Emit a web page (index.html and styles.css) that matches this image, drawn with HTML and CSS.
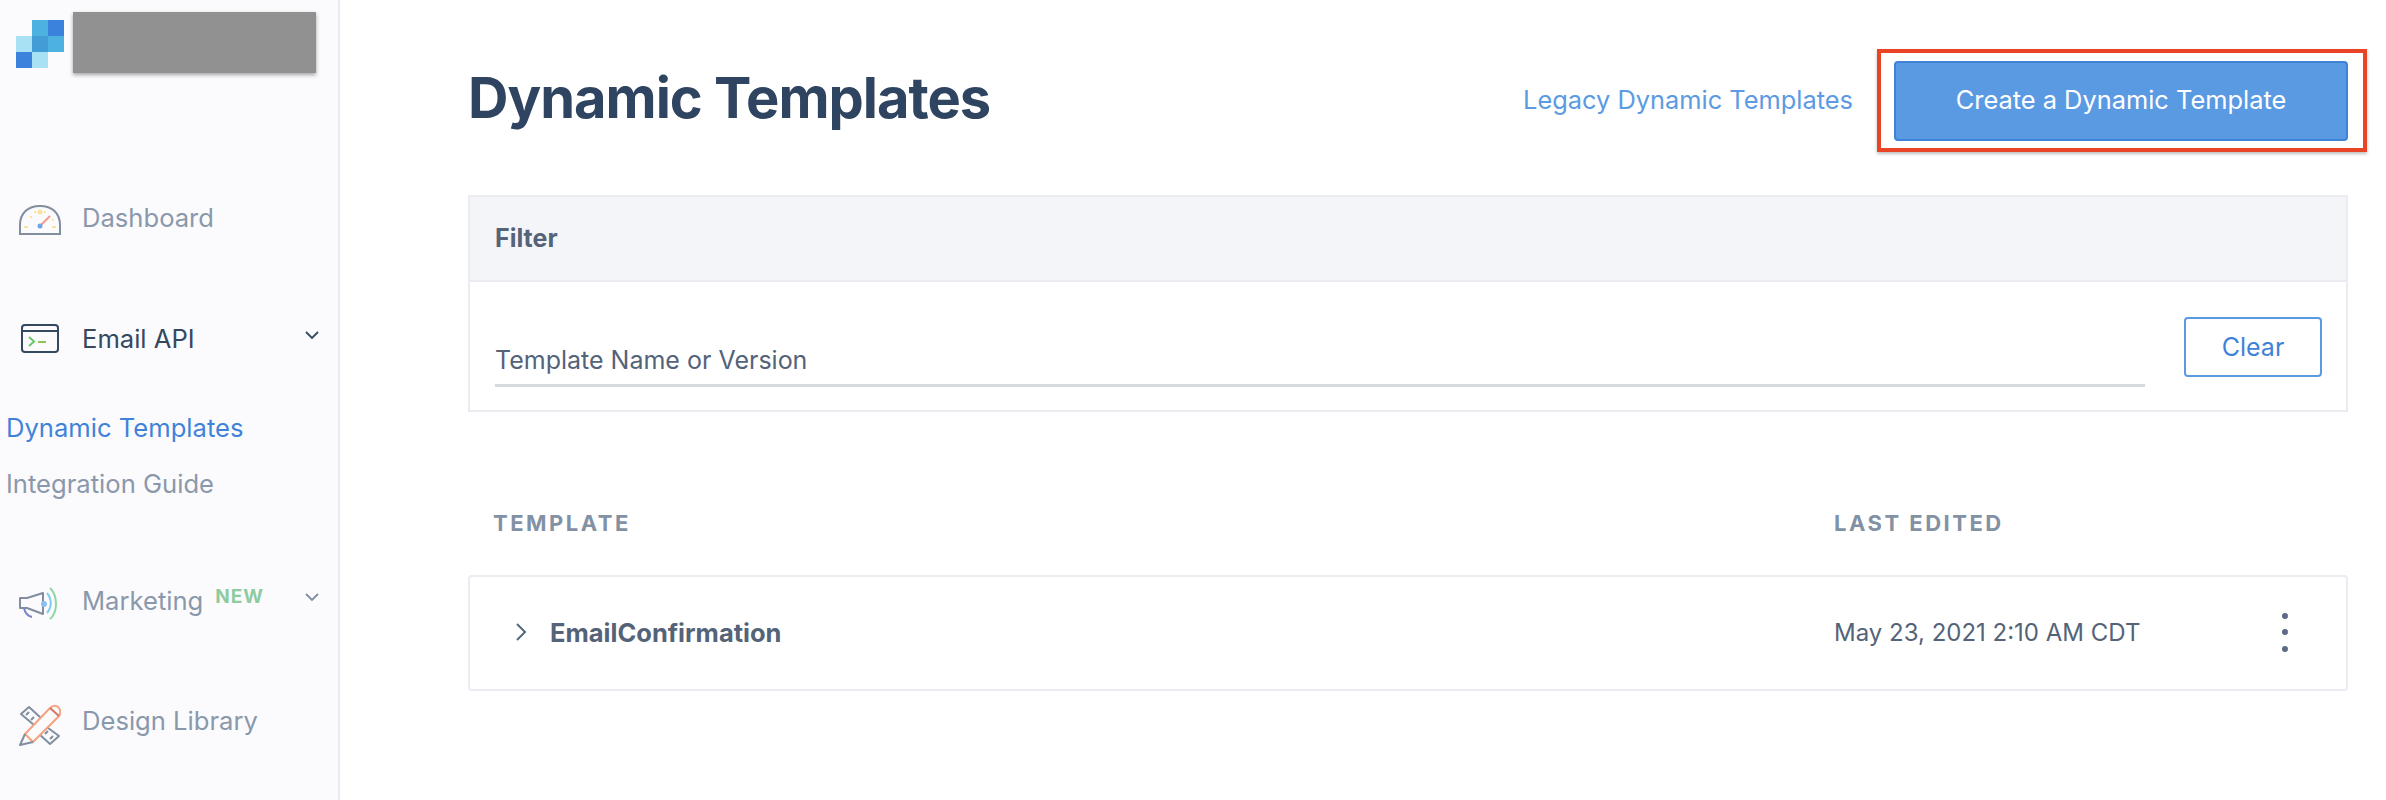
FILE: index.html
```html
<!DOCTYPE html>
<html>
  <head>
    <title>Dynamic Templates</title>
    <link rel="stylesheet" href="styles.css">
  </head>
  <body>
    <aside class="sidebar">
      <div class="brand">
        <svg class="logo" width="48" height="48" viewBox="0 0 48 48">
          <rect x="16" y="0" width="16" height="16" fill="#4db2e0"/>
          <rect x="32" y="0" width="16" height="16" fill="#3b82dc"/>
          <rect x="0" y="16" width="16" height="16" fill="#a8e1f3"/>
          <rect x="16" y="16" width="16" height="16" fill="#429cd6"/>
          <rect x="32" y="16" width="16" height="16" fill="#4db2e0"/>
          <rect x="0" y="32" width="16" height="16" fill="#3b82dc"/>
          <rect x="16" y="32" width="16" height="16" fill="#a8e1f3"/>
        </svg>
        <div class="brand-mask"></div>
      </div>

      <nav>
        <a class="nav-item nav-dashboard">
          <svg class="nav-icon" width="44" height="40" viewBox="0 0 44 40" fill="none">
            <path d="M3 37V28C3 16 11 9 23 9S43 16 43 28V37Z" stroke="#818e9f" stroke-width="2"/>
            <path d="M23 29L33 19" stroke="#f59a82" stroke-width="2"/>
            <circle cx="23" cy="29" r="2.500" fill="#6ea5ea"/>
            <circle cx="23" cy="15" r="2.500" fill="#fbe39a"/>
            <path d="M7 30H11M35 30H39M13 20H15M35 23H37M17 15H19M27 15H29" stroke="#fbe39a" stroke-width="2"/>
          </svg>
          <span>Dashboard</span>
        </a>

        <a class="nav-item nav-email">
          <svg class="nav-icon" width="44" height="40" viewBox="0 0 44 40" fill="none">
            <rect x="5" y="7" width="36" height="27" rx="3" stroke="#34495f" stroke-width="2"/>
            <path d="M5 13H41" stroke="#34495f" stroke-width="2"/>
            <path d="M12 19L17 23.500L12 28" stroke="#6cc76b" stroke-width="2"/>
            <path d="M21 24H29" stroke="#8fc45a" stroke-width="2"/>
          </svg>
          <span>Email API</span>
          <svg class="chevron" width="14" height="10" viewBox="0 0 14 10" fill="none">
            <path d="M1 2L7 8L13 2" stroke="#34495f" stroke-width="1.800"/>
          </svg>
        </a>
        <a class="sub-item sub-active">Dynamic Templates</a>
        <a class="sub-item">Integration Guide</a>

        <a class="nav-item nav-marketing">
          <svg class="nav-icon" width="44" height="40" viewBox="0 0 44 40" fill="none">
            <path d="M3 18H10L26 13V34L10 28H3Z" stroke="#818e9f" stroke-width="2" stroke-linejoin="round"/>
            <path d="M7 28C8 33 11 36 15 37" stroke="#7a84c9" stroke-width="2"/>
            <circle cx="27" cy="24" r="3" fill="#8cc0f0"/>
            <path d="M30 13C35 19 35 27 30 33" stroke="#7fcde8" stroke-width="2"/>
            <path d="M33 8C41 16 41 32 33 39" stroke="#92d6a4" stroke-width="2"/>
          </svg>
          <span>Marketing</span>
          <sup class="badge-new">NEW</sup>
          <svg class="chevron" width="14" height="10" viewBox="0 0 14 10" fill="none">
            <path d="M1 2L7 8L13 2" stroke="#818e9f" stroke-width="1.800"/>
          </svg>
        </a>

        <a class="nav-item nav-design">
          <svg class="nav-icon nav-icon-tall" width="44" height="46" viewBox="0 0 44 46" fill="none">
            <path d="M17 25L4 14L12 7L24 18" stroke="#818e9f" stroke-width="2" stroke-linejoin="round"/>
            <path d="M27 25L42 36L33 44L21 33" stroke="#818e9f" stroke-width="2" stroke-linejoin="round"/>
            <path d="M12 12L9 15M17 17L14 20M31 31L28 34M36 36L33 39" stroke="#818e9f" stroke-width="2"/>
            <path d="M8 34L33 8C36 5 40 5 42 8C44 11 44 13 42 16L16 42Z" fill="#fbfbfd" stroke="#f4a27f" stroke-width="2"/>
            <path d="M33 8L42 16" stroke="#d2765f" stroke-width="2"/>
            <path d="M8 34L3 45L16 42" stroke="#818e9f" stroke-width="2" stroke-linejoin="round"/>
          </svg>
          <span>Design Library</span>
        </a>
      </nav>
    </aside>

    <main class="content">
      <header class="page-header">
        <h1>Dynamic Templates</h1>
        <a class="legacy-link">Legacy Dynamic Templates</a>
        <div class="callout">
          <button class="btn-primary">Create a Dynamic Template</button>
        </div>
      </header>

      <section class="filter-panel">
        <div class="filter-title">Filter</div>
        <div class="filter-body">
          <div class="filter-field">Template Name or Version</div>
          <button class="btn-outline">Clear</button>
        </div>
      </section>

      <div class="table-head">
        <span class="col-name">TEMPLATE</span>
        <span class="col-date">LAST EDITED</span>
      </div>

      <div class="table-row">
        <svg class="row-toggle" width="12" height="18" viewBox="0 0 12 18" fill="none">
          <path d="M2 1L10 9L2 17" stroke="#56677d" stroke-width="2"/>
        </svg>
        <span class="row-name">EmailConfirmation</span>
        <span class="row-date">May 23, 2021 2:10 AM CDT</span>
        <div class="row-menu">
          <i></i><i></i><i></i>
        </div>
      </div>
    </main>
  </body>
</html>
```

FILE: styles.css
```css
body {
  font-family: Inter, "Liberation Sans", sans-serif;
  background-color: #fff;
  color: #546378;
  margin: 0;
  display: flex;
  height: 800px;
  overflow: hidden;
}
.sidebar {
  width: 338px;
  flex: none;
  background-color: #fbfbfd;
  border-right: 2px solid #ebecf2;
}
.brand {
  display: flex;
  align-items: flex-start;
  padding: 12px 0 0 16px;
  gap: 9px;
}
.logo {
  margin-top: 8px;
}
.brand-mask {
  width: 243px;
  height: 61px;
  background-color: #919191;
  box-shadow: 0 2px 4px rgba(0, 0, 0, 0.35);
}
.nav-item {
  display: flex;
  align-items: center;
  height: 40px;
  padding-left: 17px;
  font-size: 25.600px;
  color: #8a98ab;
}
.nav-icon {
  flex: none;
  margin-right: 21px;
}
.nav-icon-tall {
  margin-top: 3px;
  margin-bottom: -3px;
}
.chevron {
  margin-left: auto;
  margin-right: 19px;
  margin-bottom: 6px;
}
.nav-dashboard {
  margin-top: 124px;
}
.nav-email {
  margin-top: 81px;
  color: #34495f;
}
.sub-item {
  display: block;
  padding-left: 6px;
  font-size: 25.600px;
  line-height: 40px;
  height: 40px;
  color: #8a98ab;
  margin-top: 16px;
}
.nav-email + .sub-item {
  margin-top: 50px;
}
.sub-active {
  color: #3f83d9;
}
.nav-marketing {
  margin-top: 76px;
}
.badge-new {
  color: #8fcba0;
  font-size: 19px;
  font-weight: 700;
  letter-spacing: 1px;
  margin: -8px 0 0 12px;
}
.nav-design {
  margin-top: 80px;
}
.content {
  flex: 1;
  min-width: 0;
  padding: 0 38px 0 128px;
}
.page-header {
  display: flex;
  align-items: center;
  height: 195px;
}
.page-header h1 {
  margin: 0 auto 0 0;
  font-size: 56px;
  font-weight: 700;
  letter-spacing: -1px;
  color: #2e4460;
}
.legacy-link {
  color: #5c9ae2;
  font-size: 25.400px;
  margin: 3px 24px 0 0;
}
.callout {
  padding: 8px 15px 7px 13px;
  margin: 5px -19px 0 0;
  border: 4px solid #ea4426;
  box-shadow: 0 2px 3px rgba(0, 0, 0, 0.25);
}
.btn-primary {
  display: block;
  width: 454px;
  height: 80px;
  padding-bottom: 4px;
  background-color: #5a9ae2;
  color: white;
  border: 2px solid #3f83d9;
  border-radius: 4px;
  font-family: inherit;
  font-size: 25.400px;
}
.filter-panel {
  border: 2px solid #ebecf2;
  height: 217px;
  box-sizing: border-box;
}
.filter-title {
  height: 85px;
  box-sizing: border-box;
  background-color: #f4f5f8;
  border-bottom: 2px solid #ebecf2;
  padding-left: 25px;
  font-size: 25px;
  font-weight: 700;
  line-height: 83px;
}
.filter-body {
  display: flex;
  align-items: flex-start;
  justify-content: space-between;
  padding: 0 24px 0 25px;
}
.filter-field {
  width: 1650px;
  height: 55px;
  margin-top: 50px;
  box-sizing: border-box;
  border-bottom: 3px solid #d6d9df;
  font-size: 25px;
  line-height: 56px;
}
.btn-outline {
  width: 138px;
  height: 60px;
  margin-top: 35px;
  background-color: white;
  color: #3f83d9;
  border: 2px solid #5a9ae2;
  border-radius: 4px;
  font-family: inherit;
  font-size: 25px;
}
.table-head {
  display: flex;
  margin-top: 95px;
  padding-left: 25px;
  height: 32px;
  line-height: 32px;
  font-size: 22px;
  font-weight: 700;
  letter-spacing: 2.500px;
  color: #8291a3;
}
.col-name {
  width: 1341px;
}
.table-row {
  display: flex;
  align-items: center;
  margin-top: 36px;
  height: 116px;
  box-sizing: border-box;
  border: 2px solid #ebecf2;
  border-radius: 4px;
  padding-left: 45px;
  padding-bottom: 2px;
  font-size: 24px;
}
.row-toggle {
  margin-right: 23px;
}
.row-name {
  width: 1284px;
  font-weight: 700;
  font-size: 25.500px;
}
.row-date {
  width: 448px;
}
.row-menu {
  display: flex;
  flex-direction: column;
  gap: 10.500px;
}
.row-menu i {
  display: block;
  width: 6px;
  height: 6px;
  border-radius: 50%;
  background-color: #5a6b82;
}
```
